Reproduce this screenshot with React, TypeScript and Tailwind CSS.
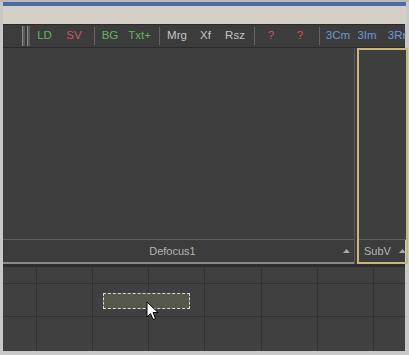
import { Fragment } from 'react';

type Item =
  | { kind: 'btn'; label: string; color: string; w: number }
  | { kind: 'sep'; ml: number };

const green = 'text-[#5cb85c]';
const red = 'text-[#c85a5a]';
const grey = 'text-[#c4c4c4]';
const blue = 'text-[#6a9ad8]';

const items: Item[] = [
  { kind: 'btn', label: 'LD', color: green, w: 29 },
  { kind: 'btn', label: 'SV', color: red, w: 30 },
  { kind: 'sep', ml: 5 },
  { kind: 'btn', label: 'BG', color: green, w: 30 },
  { kind: 'btn', label: 'Txt+', color: green, w: 29 },
  { kind: 'sep', ml: 5 },
  { kind: 'btn', label: 'Mrg', color: grey, w: 34 },
  { kind: 'btn', label: 'Xf', color: grey, w: 23 },
  { kind: 'btn', label: 'Rsz', color: grey, w: 36 },
  { kind: 'sep', ml: 1 },
  { kind: 'btn', label: '?', color: red, w: 32 },
  { kind: 'btn', label: '?', color: red, w: 26 },
  { kind: 'sep', ml: 6 },
  { kind: 'btn', label: '3Cm', color: blue, w: 36 },
  { kind: 'btn', label: '3Im', color: blue, w: 22 },
  { kind: 'btn', label: '3Rr', color: blue, w: 38 },
];

function UpArrow() {
  return (
    <svg width="7" height="4" viewBox="0 0 7 4" className="shrink-0">
      <polygon points="0,4 7,4 3.5,0" fill="#a8a8a8" />
    </svg>
  );
}

function Cursor() {
  return (
    <svg width="13" height="20" viewBox="0 0 13 20" className="absolute left-[146px] top-[301px]">
      <path d="M1 1 L1 16 L4.5 12.5 L7 18.5 L9.5 17.5 L7 11.5 L12 11.5 Z" fill="#fff" stroke="#000" strokeWidth="1" />
    </svg>
  );
}

export default function App() {
  const cols = [36, 92, 148, 204, 261, 317, 373];
  return (
    <div
      className="relative w-[409px] h-[355px] overflow-hidden bg-[#c8c8c8] flex flex-col"
      style={{ fontFamily: '"Liberation Sans", Arial, sans-serif' }}
    >
      {/* title strip */}
      <div className="h-[2px] bg-[#b8b8b8]" />
      <div className="h-[4px] mx-[3px] bg-[#4a6aa8]" />
      <div className="h-[18px] mx-[3px] bg-[#d4d0c8]" />
      <div className="flex-1 ml-[3px] mr-[4px] mb-[4px] flex flex-col bg-[#3c3c3c] border-t border-[#2a2a2a]">
        {/* toolbar */}
        <div className="h-[23px] flex items-center text-[11.5px] border-b border-[#2a2a2a] whitespace-nowrap">
          <div className="ml-[19px] flex gap-[2px] h-full py-[1px] shrink-0">
            <div className="w-[3px] bg-[#5a5a5a] border-l border-[#8a8a8a]" />
            <div className="w-[3px] bg-[#5a5a5a] border-l border-[#8a8a8a]" />
          </div>
          {items.map((it, i) =>
            it.kind === 'sep' ? (
              <div key={i} className="w-px h-[18px] bg-[#646464] shrink-0" style={{ marginLeft: it.ml }} />
            ) : (
              <Fragment key={i}>
                <div className={`text-center shrink-0 ${it.color}`} style={{ width: it.w }}>
                  {it.label}
                </div>
              </Fragment>
            )
          )}
        </div>
        {/* viewers */}
        <div className="h-[216px] flex">
          <div className="w-[352px] shrink-0 flex flex-col border-r border-[#5a5a5a]">
            <div className="flex-1 bg-[#3e3e3e]" />
            <div className="h-[25px] border-t border-[#5e5e5e] border-b-2 border-b-[#8a8a8a] flex items-center text-[11px] text-[#b4b4b4]">
              <div className="flex-1 text-center pl-[4px]">Defocus1</div>
              <div className="w-[16px] flex items-center justify-center">
                <UpArrow />
              </div>
            </div>
          </div>
          <div className="w-[2px] shrink-0" />
          <div className="flex-1 flex flex-col border-2 border-[#c8b878]">
            <div className="flex-1 bg-[#3e3e3e]" />
            <div className="h-[23px] flex items-center text-[11px] text-[#b4b4b4] border-t border-[#5e5e5e] pl-[5px] gap-[8px]">
              <span>SubV</span>
              <UpArrow />
            </div>
          </div>
        </div>
        <div className="h-[3px] bg-[#2e2e2e]" />
        {/* node graph */}
        <div className="flex-1 relative bg-[#404040]">
          {cols.map((x) => (
            <div key={x} className="absolute top-0 bottom-0 w-px bg-[#333333]" style={{ left: x - 3 }} />
          ))}
          <div className="absolute left-0 right-0 top-[16px] h-px bg-[#333333]" />
          <div className="absolute left-0 right-0 top-[49px] h-px bg-[#333333]" />
          <div className="absolute left-[100px] top-[26px] w-[87px] h-[16px] bg-[#55574a] border border-dashed border-[#d8d8d8]" />
        </div>
      </div>
      <Cursor />
    </div>
  );
}
